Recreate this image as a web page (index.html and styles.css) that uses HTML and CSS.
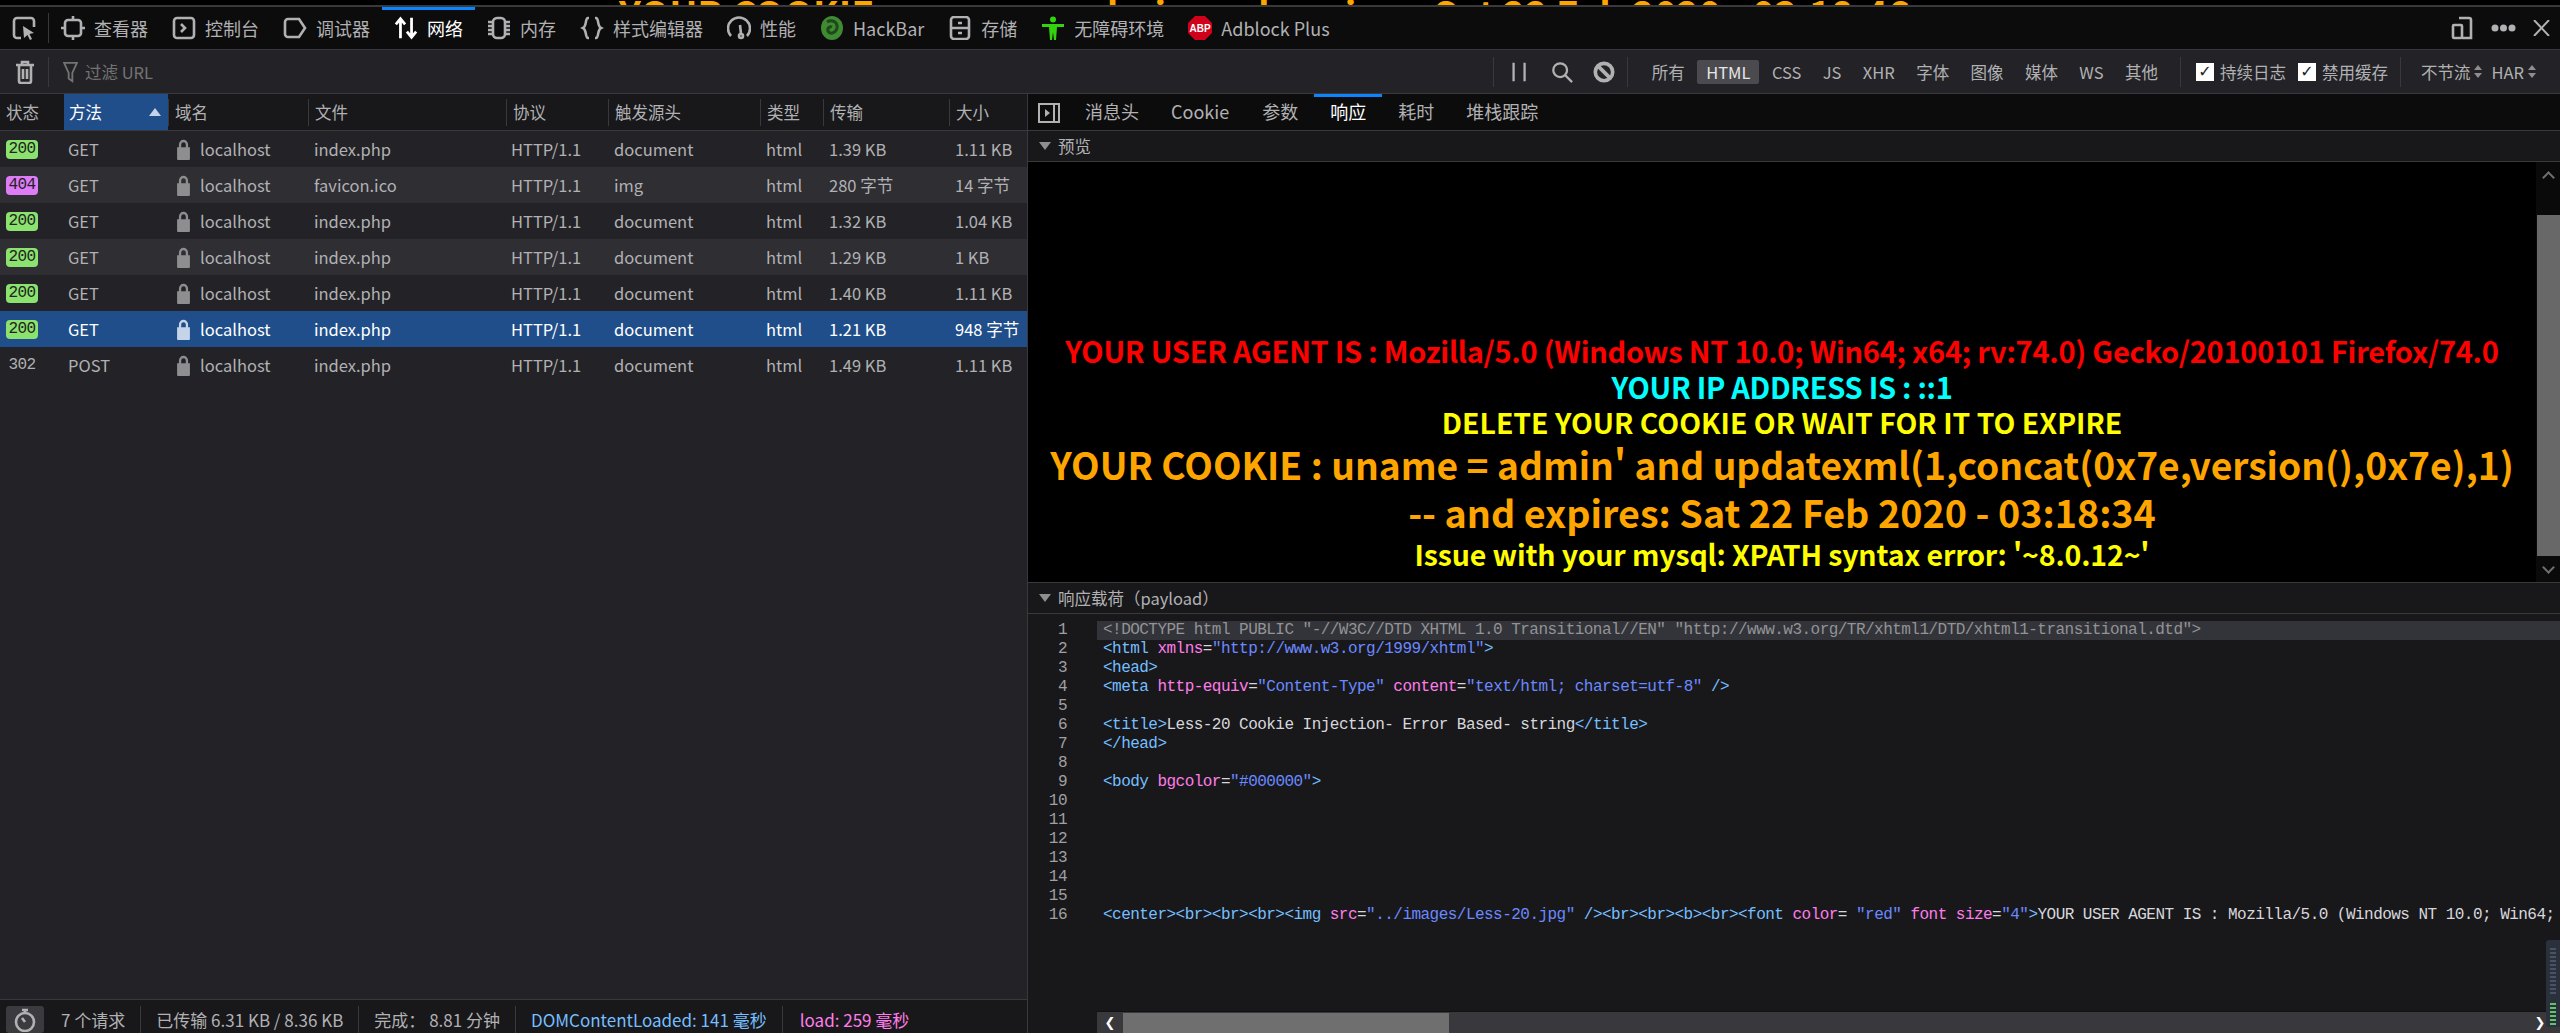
FILE: index.html
```html
<!DOCTYPE html>
<html lang="zh">
<head>
    <meta charset="UTF-8">
    <title>网络</title>
    <link rel="stylesheet" href="styles.css">
</head>
<body>
    <div class="page-strip"><span>YOUR COOKIE : uname = admin and expires: Sat 22 Feb 2020 - 03:18:46</span></div>

    <div class="toolbox">
        <div class="picker">
            <svg class="icon" viewBox="0 0 24 24"><path d="M9 22H5a3 3 0 0 1-3-3V5a3 3 0 0 1 3-3h14a3 3 0 0 1 3 3v6"/><path class="solid" d="M11 10l11 7-4.500 1 2.500 5-2 1-2.500-5L12 22z"/></svg>
        </div>
        <div class="tab">
            <svg class="icon" viewBox="0 0 24 24"><rect x="4" y="4" width="16" height="16" rx="3"/><path d="M12 0v4M12 20v4M0 12h4M20 12h4"/></svg>
            查看器
        </div>
        <div class="tab">
            <svg class="icon" viewBox="0 0 24 24"><rect x="2" y="2" width="20" height="20" rx="3"/><path d="M9 8l4 4-4 4"/></svg>
            控制台
        </div>
        <div class="tab">
            <svg class="icon" viewBox="0 0 24 24"><path d="M5 3h11l6 9-6 9H5a3 3 0 0 1-3-3V6a3 3 0 0 1 3-3z"/></svg>
            调试器
        </div>
        <div class="tab tab-active">
            <svg class="icon icon-white" viewBox="0 0 26 24"><path d="M7 23V2M2 8l5-6 5 6M19 1v21M14 16l5 6 5-6"/></svg>
            网络
        </div>
        <div class="tab">
            <svg class="icon" viewBox="0 0 24 24"><rect x="6" y="2" width="12" height="20" rx="4"/><path d="M1 6h4M1 10h4M1 14h4M1 18h4M19 6h4M19 10h4M19 14h4M19 18h4"/></svg>
            内存
        </div>
        <div class="tab">
            <svg class="icon" viewBox="0 0 24 24"><path d="M9 2H8C5 2 7 10 3 12c4 2 2 10 5 10h1M15 2h1c3 0 1 8 5 10-4 2-2 10-5 10h-1"/></svg>
            样式编辑器
        </div>
        <div class="tab">
            <svg class="icon" viewBox="0 0 24 24"><path d="M4 20A11 11 0 1 1 20 20"/><path d="M13 9l1 9"/><circle cx="14" cy="20" r="2"/></svg>
            性能
        </div>
        <div class="tab">
            <svg class="icon icon-plain" viewBox="0 0 24 24"><ellipse cx="12" cy="12" rx="11" ry="12" fill="#3f8a33"/><path d="M7 6c5-3 11 0 10 6-1 5-7 7-9 3-1-3 2-5 4-4" fill="none" stroke="#1d4a18" stroke-width="3"/></svg>
            HackBar
        </div>
        <div class="tab">
            <svg class="icon" viewBox="0 0 24 24"><rect x="3" y="1" width="18" height="22" rx="3"/><path d="M3 12h18M10 7h4M10 17h4"/></svg>
            存储
        </div>
        <div class="tab">
            <svg class="icon icon-plain" viewBox="0 0 24 24"><circle cx="12" cy="3.500" r="3" fill="#33d40f"/><path fill="#33d40f" d="M1 8h22v3h-7l-1 13h-2l-1-8-1 8H9L8 11H1z"/></svg>
            无障碍环境
        </div>
        <div class="tab">
            <svg class="icon icon-plain" viewBox="0 0 24 24"><path fill="#d0021b" d="M7 0h10l7 7v10l-7 7H7l-7-7V7z"/><text x="12" y="16" class="abp-text">ABP</text></svg>
            Adblock Plus
        </div>
        <div class="toolbox-end">
            <svg class="icon" viewBox="0 0 24 24"><path d="M9 2h10a2 2 0 0 1 2 2v18h-9"/><rect x="3" y="9" width="9" height="13" rx="1"/></svg>
            <svg class="dots" viewBox="0 0 25 8"><circle cx="4" cy="4" r="3.500"/><circle cx="12.500" cy="4" r="3.500"/><circle cx="21" cy="4" r="3.500"/></svg>
            <svg class="close" viewBox="0 0 17 16"><path d="M1 0l15 16M16 0L1 16"/></svg>
        </div>
    </div>

    <div class="filterbar">
        <div class="trash">
            <svg class="icon" viewBox="0 0 24 24"><path d="M3 5h18M9 5V2h6v3M6 5v16a2 2 0 0 0 2 2h8a2 2 0 0 0 2-2V5M10 9v10M14 9v10"/></svg>
        </div>
        <div class="url-filter">
            <svg class="funnel" viewBox="0 0 16 24"><path d="M1 2h14l-5 11v9l-4-3v-6z"/></svg>
            过滤 URL
        </div>
        <div class="filter-tools">
            <svg class="tool" viewBox="0 0 24 24"><path d="M5 2v20M17 2v20"/></svg>
            <svg class="tool" viewBox="0 0 24 24"><circle cx="10" cy="10" r="7.500"/><path d="M15 15l8 8"/></svg>
            <svg class="tool tool-block" viewBox="0 0 24 24"><circle cx="12" cy="12" r="9.500"/><path d="M5 5l14 14"/></svg>
        </div>
        <div class="type-filters">
            <span class="type">所有</span>
            <span class="type type-on">HTML</span>
            <span class="type">CSS</span>
            <span class="type">JS</span>
            <span class="type">XHR</span>
            <span class="type">字体</span>
            <span class="type">图像</span>
            <span class="type">媒体</span>
            <span class="type">WS</span>
            <span class="type">其他</span>
        </div>
        <div class="checks">
            <span class="check"><span class="box">✓</span>持续日志</span>
            <span class="check"><span class="box">✓</span>禁用缓存</span>
        </div>
        <div class="selects">
            <span class="select">不节流<svg class="updown" viewBox="0 0 8 13"><path d="M0 5l4-5 4 5zM0 8l4 5 4-5z"/></svg></span>
            <span class="select">HAR<svg class="updown" viewBox="0 0 8 13"><path d="M0 5l4-5 4 5zM0 8l4 5 4-5z"/></svg></span>
        </div>
    </div>

    <div class="main">
        <div class="requests">
            <div class="net-head">
                <div class="th th-first">状态</div>
                <div class="th th-sorted">方法<span class="sort-arrow"></span></div>
                <div class="th">域名</div>
                <div class="th">文件</div>
                <div class="th">协议</div>
                <div class="th">触发源头</div>
                <div class="th">类型</div>
                <div class="th">传输</div>
                <div class="th">大小</div>
            </div>
            <div class="net-list">
                <div class="net-row">
                    <div class="td"><span class="badge">200</span></div><div class="td">GET</div>
                    <div class="td td-host"><svg class="lock" viewBox="0 0 16 24"><path d="M1 10h2V7a5 5 0 0 1 10 0v3h2v13a1 1 0 0 1-1 1H2a1 1 0 0 1-1-1zM5.500 10h5V7a2.500 2.500 0 0 0-5 0z"/></svg>localhost</div>
                    <div class="td">index.php</div><div class="td">HTTP/1.1</div><div class="td">document</div><div class="td">html</div><div class="td">1.39 KB</div><div class="td">1.11 KB</div>
                </div>
                <div class="net-row">
                    <div class="td"><span class="badge badge-404">404</span></div><div class="td">GET</div>
                    <div class="td td-host"><svg class="lock" viewBox="0 0 16 24"><path d="M1 10h2V7a5 5 0 0 1 10 0v3h2v13a1 1 0 0 1-1 1H2a1 1 0 0 1-1-1zM5.500 10h5V7a2.500 2.500 0 0 0-5 0z"/></svg>localhost</div>
                    <div class="td">favicon.ico</div><div class="td">HTTP/1.1</div><div class="td">img</div><div class="td">html</div><div class="td">280 字节</div><div class="td">14 字节</div>
                </div>
                <div class="net-row">
                    <div class="td"><span class="badge">200</span></div><div class="td">GET</div>
                    <div class="td td-host"><svg class="lock" viewBox="0 0 16 24"><path d="M1 10h2V7a5 5 0 0 1 10 0v3h2v13a1 1 0 0 1-1 1H2a1 1 0 0 1-1-1zM5.500 10h5V7a2.500 2.500 0 0 0-5 0z"/></svg>localhost</div>
                    <div class="td">index.php</div><div class="td">HTTP/1.1</div><div class="td">document</div><div class="td">html</div><div class="td">1.32 KB</div><div class="td">1.04 KB</div>
                </div>
                <div class="net-row">
                    <div class="td"><span class="badge">200</span></div><div class="td">GET</div>
                    <div class="td td-host"><svg class="lock" viewBox="0 0 16 24"><path d="M1 10h2V7a5 5 0 0 1 10 0v3h2v13a1 1 0 0 1-1 1H2a1 1 0 0 1-1-1zM5.500 10h5V7a2.500 2.500 0 0 0-5 0z"/></svg>localhost</div>
                    <div class="td">index.php</div><div class="td">HTTP/1.1</div><div class="td">document</div><div class="td">html</div><div class="td">1.29 KB</div><div class="td">1 KB</div>
                </div>
                <div class="net-row">
                    <div class="td"><span class="badge">200</span></div><div class="td">GET</div>
                    <div class="td td-host"><svg class="lock" viewBox="0 0 16 24"><path d="M1 10h2V7a5 5 0 0 1 10 0v3h2v13a1 1 0 0 1-1 1H2a1 1 0 0 1-1-1zM5.500 10h5V7a2.500 2.500 0 0 0-5 0z"/></svg>localhost</div>
                    <div class="td">index.php</div><div class="td">HTTP/1.1</div><div class="td">document</div><div class="td">html</div><div class="td">1.40 KB</div><div class="td">1.11 KB</div>
                </div>
                <div class="net-row net-row-selected">
                    <div class="td"><span class="badge">200</span></div><div class="td">GET</div>
                    <div class="td td-host"><svg class="lock" viewBox="0 0 16 24"><path d="M1 10h2V7a5 5 0 0 1 10 0v3h2v13a1 1 0 0 1-1 1H2a1 1 0 0 1-1-1zM5.500 10h5V7a2.500 2.500 0 0 0-5 0z"/></svg>localhost</div>
                    <div class="td">index.php</div><div class="td">HTTP/1.1</div><div class="td">document</div><div class="td">html</div><div class="td">1.21 KB</div><div class="td">948 字节</div>
                </div>
                <div class="net-row">
                    <div class="td"><span class="badge-plain">302</span></div><div class="td">POST</div>
                    <div class="td td-host"><svg class="lock" viewBox="0 0 16 24"><path d="M1 10h2V7a5 5 0 0 1 10 0v3h2v13a1 1 0 0 1-1 1H2a1 1 0 0 1-1-1zM5.500 10h5V7a2.500 2.500 0 0 0-5 0z"/></svg>localhost</div>
                    <div class="td">index.php</div><div class="td">HTTP/1.1</div><div class="td">document</div><div class="td">html</div><div class="td">1.49 KB</div><div class="td">1.11 KB</div>
                </div>
            </div>
            <div class="summary">
                <div class="clock">
                    <svg class="icon" viewBox="0 0 24 24"><circle cx="12" cy="14" r="9"/><path d="M9 2h6M12 2v3M12 14l-3-4"/></svg>
                </div>
                <span class="stat stat-count">7 个请求</span>
                <span class="stat">已传输 6.31 KB / 8.36 KB</span>
                <span class="stat">完成： 8.81 分钟</span>
                <span class="stat stat-dom">DOMContentLoaded: 141 毫秒</span>
                <span class="stat stat-load">load: 259 毫秒</span>
            </div>
        </div>

        <div class="details">
            <div class="detail-tabs">
                <svg class="side-toggle" viewBox="0 0 22 20"><rect x="1" y="1" width="20" height="18"/><path d="M16 1v18"/><path class="solid" d="M7 6l5 4-5 4z"/></svg>
                <span class="dtab">消息头</span>
                <span class="dtab dtab-cookie">Cookie</span>
                <span class="dtab">参数</span>
                <span class="dtab dtab-active">响应</span>
                <span class="dtab">耗时</span>
                <span class="dtab">堆栈跟踪</span>
            </div>
            <div class="section-head"><span class="caret"></span>预览</div>
            <div class="preview">
                <div class="preview-body">
                    <div class="pv pv-red">YOUR USER AGENT IS : Mozilla/5.0 (Windows NT 10.0; Win64; x64; rv:74.0) Gecko/20100101 Firefox/74.0</div>
                    <div class="pv pv-cyan">YOUR IP ADDRESS IS : ::1</div>
                    <div class="pv pv-delete">DELETE YOUR COOKIE OR WAIT FOR IT TO EXPIRE</div>
                    <div class="pv pv-big pv-cookie">YOUR COOKIE : uname = admin' and updatexml(1,concat(0x7e,version(),0x7e),1)</div>
                    <div class="pv pv-big">-- and expires: Sat 22 Feb 2020 - 03:18:34</div>
                    <div class="pv pv-issue">Issue with your mysql: XPATH syntax error: '~8.0.12~'</div>
                </div>
                <div class="vscroll">
                    <span class="chev chev-up"></span>
                    <div class="vthumb"></div>
                    <span class="chev chev-down"></span>
                </div>
            </div>
            <div class="section-head"><span class="caret"></span>响应载荷（payload）</div>
            <div class="code">
                <div class="line line-on"><span class="ln">1</span><span class="src doctype">&lt;!DOCTYPE html PUBLIC "-//W3C//DTD XHTML 1.0 Transitional//EN" "http://www.w3.org/TR/xhtml1/DTD/xhtml1-transitional.dtd"&gt;</span></div>
                <div class="line"><span class="ln">2</span><span class="src"><b>&lt;html</b> <i>xmlns</i>=<u>"http://www.w3.org/1999/xhtml"</u><b>&gt;</b></span></div>
                <div class="line"><span class="ln">3</span><span class="src"><b>&lt;head&gt;</b></span></div>
                <div class="line"><span class="ln">4</span><span class="src"><b>&lt;meta</b> <i>http-equiv</i>=<u>"Content-Type"</u> <i>content</i>=<u>"text/html; charset=utf-8"</u> <b>/&gt;</b></span></div>
                <div class="line"><span class="ln">5</span><span class="src"></span></div>
                <div class="line"><span class="ln">6</span><span class="src"><b>&lt;title&gt;</b>Less-20 Cookie Injection- Error Based- string<b>&lt;/title&gt;</b></span></div>
                <div class="line"><span class="ln">7</span><span class="src"><b>&lt;/head&gt;</b></span></div>
                <div class="line"><span class="ln">8</span><span class="src"></span></div>
                <div class="line"><span class="ln">9</span><span class="src"><b>&lt;body</b> <i>bgcolor</i>=<u>"#000000"</u><b>&gt;</b></span></div>
                <div class="line"><span class="ln">10</span><span class="src"></span></div>
                <div class="line"><span class="ln">11</span><span class="src"></span></div>
                <div class="line"><span class="ln">12</span><span class="src"></span></div>
                <div class="line"><span class="ln">13</span><span class="src"></span></div>
                <div class="line"><span class="ln">14</span><span class="src"></span></div>
                <div class="line"><span class="ln">15</span><span class="src"></span></div>
                <div class="line"><span class="ln">16</span><span class="src"><b>&lt;center&gt;&lt;br&gt;&lt;br&gt;&lt;br&gt;&lt;img</b> <i>src</i>=<u>"../images/Less-20.jpg"</u> <b>/&gt;&lt;br&gt;&lt;br&gt;&lt;b&gt;&lt;br&gt;&lt;font</b> <i>color</i>= <u>"red"</u> <i>font</i> <i>size</i>=<u>"4"</u><b>&gt;</b>YOUR USER AGENT IS : Mozilla/5.0 (Windows NT 10.0; Win64;</span></div>
            </div>
            <div class="hscroll-row">
                <div class="hscroll">
                    <span class="hchev">❮</span>
                    <div class="hthumb"></div>
                    <span class="hchev hchev-end">❯</span>
                </div>
            </div>
            <div class="meter"></div>
        </div>
    </div>
</body>
</html>
```
FILE: styles.css
```css
* {
    box-sizing: border-box;
}

body {
    margin: 0;
    height: 100vh;
    display: flex;
    flex-direction: column;
    overflow: hidden;
    background: #000;
    color: #b1b1b3;
    font-family: "Noto Sans CJK SC", "Liberation Sans", sans-serif;
    font-size: 16.5px;
}

.page-strip {
    height: 5px;
    flex: none;
    overflow: hidden;
    padding-left: 619px;
    background: #000;
    color: orange;
    font-weight: bold;
    font-size: 37.700px;
    line-height: 26px;
    white-space: nowrap;
}

.icon {
    width: 24px;
    height: 24px;
    flex: none;
    fill: none;
    stroke: #b1b1b3;
    stroke-width: 2.600;
}

.icon-white {
    stroke: #fff;
    stroke-width: 3;
}

.icon-plain {
    stroke: none;
}

.solid {
    fill: #b1b1b3;
    stroke: none;
}

.abp-text {
    fill: #fff;
    font-size: 10px;
    font-weight: bold;
    text-anchor: middle;
    font-family: "Liberation Sans", sans-serif;
}

/* top tabs */
.toolbox {
    height: 45px;
    flex: none;
    display: flex;
    align-items: center;
    background: #0c0c0d;
    border-top: 2px solid #38383d;
    border-bottom: 1px solid #38383d;
    font-size: 18px;
}

.picker {
    width: 49px;
    height: 30px;
    flex: none;
    display: flex;
    align-items: center;
    padding-left: 12px;
    border-right: 1px solid #38383d;
}

.tab {
    height: 100%;
    display: flex;
    align-items: center;
    gap: 9px;
    padding: 0 12px;
    white-space: nowrap;
}

.tab-active {
    color: #fff;
    box-shadow: inset 0 3px 0 #0a84ff;
}

.toolbox-end {
    margin-left: auto;
    display: flex;
    align-items: center;
    gap: 17px;
    padding-right: 10px;
}

.dots {
    width: 25px;
    height: 8px;
    fill: #b1b1b3;
}

.close {
    width: 17px;
    height: 16px;
    fill: none;
    stroke: #b1b1b3;
    stroke-width: 2;
}

/* filter bar */
.filterbar {
    height: 44px;
    flex: none;
    display: flex;
    align-items: center;
    padding-right: 24px;
    background: #232327;
    border-bottom: 1px solid #38383d;
}

.trash {
    width: 49px;
    height: 30px;
    flex: none;
    display: flex;
    align-items: center;
    padding-left: 13px;
    border-right: 1px solid #38383d;
}

.url-filter {
    display: flex;
    align-items: center;
    gap: 7px;
    padding-left: 14px;
    color: #737373;
    flex: 1;
}

.funnel {
    width: 15px;
    height: 22px;
    fill: none;
    stroke: #737373;
    stroke-width: 2;
}

.filter-tools {
    height: 30px;
    display: flex;
    align-items: center;
    gap: 20px;
    padding: 0 12px 0 15px;
    border-left: 1px solid #38383d;
    border-right: 1px solid #38383d;
}

.tool {
    width: 22px;
    height: 22px;
    fill: none;
    stroke: #b1b1b3;
    stroke-width: 2.500;
}

.tool-block {
    stroke-width: 4;
}

.type-filters {
    height: 30px;
    display: flex;
    align-items: center;
    gap: 3.400px;
    padding: 0 13px 0 15px;
    border-right: 1px solid #38383d;
}

.type {
    height: 24px;
    line-height: 24px;
    padding: 0 9px;
    border-radius: 2px;
}

.type-on {
    background: #4a4a4f;
    color: #e6e6e7;
}

.checks {
    display: flex;
    align-items: center;
    gap: 12px;
    padding: 0 12px 0 15px;
}

.check {
    display: flex;
    align-items: center;
    gap: 6px;
}

.box {
    width: 18px;
    height: 18px;
    background: #fff;
    color: #222;
    font-size: 16px;
    line-height: 18px;
    text-align: center;
    font-family: "DejaVu Sans", sans-serif;
}

.selects {
    height: 30px;
    display: flex;
    align-items: center;
    gap: 9px;
    padding-left: 20px;
    border-left: 1px solid #38383d;
}

.select {
    display: flex;
    align-items: center;
    gap: 4px;
}

.updown {
    width: 8px;
    height: 13px;
    fill: #8e8e91;
}

/* main area */
.main {
    flex: 1;
    min-height: 0;
    display: flex;
    position: relative;
}

.requests {
    width: 1028px;
    flex: none;
    display: flex;
    flex-direction: column;
    background: #232327;
    border-right: 1px solid #38383d;
}

.net-head,
.net-row {
    display: grid;
    grid-template-columns: 64px 104px 140px 198px 102px 152px 63px 126px 78px;
}

.net-head {
    height: 37px;
    flex: none;
    align-items: center;
    background: #18181b;
    border-bottom: 1px solid #38383d;
}

.th {
    height: 27px;
    line-height: 27px;
    padding-left: 6px;
    border-left: 1px solid #38383d;
    white-space: nowrap;
}

.th-first {
    border-left: 0;
}

.th-sorted {
    height: 36px;
    line-height: 36px;
    display: flex;
    align-items: center;
    justify-content: space-between;
    padding-left: 5px;
    padding-right: 7px;
    border-left: 0;
    background: #204e8a;
    color: #fff;
}

.sort-arrow {
    border-left: 6px solid transparent;
    border-right: 6px solid transparent;
    border-bottom: 8px solid #c5d4e8;
}

.net-list {
    flex: 1;
}

.net-row {
    height: 36px;
    align-items: center;
}

.net-row:nth-child(even) {
    background: #2e2e33;
}

.net-row-selected,
.net-row-selected:nth-child(even) {
    background: #204e8a;
    color: #fff;
}

.td {
    padding-left: 6px;
    white-space: nowrap;
}

.td:nth-child(2) {
    padding-left: 4px;
}

.td:nth-child(5) {
    padding-left: 5px;
}

.td-host {
    display: flex;
    align-items: center;
    gap: 9px;
    padding-left: 8px;
}

.lock {
    width: 15px;
    height: 22px;
    fill: #8e8e91;
    fill-rule: evenodd;
}

.net-row-selected .lock {
    fill: #c5d4e8;
}

.badge,
.badge-plain {
    display: block;
    width: 32px;
    height: 19px;
    line-height: 19px;
    text-align: center;
    font-family: "Liberation Mono", monospace;
    font-size: 16px;
    letter-spacing: -0.520px;
}

.badge {
    background: #8be26f;
    color: #222;
    border-radius: 4px;
}

.badge-404 {
    background: #de7cf7;
}

/* summary bar */
.summary {
    height: 34px;
    flex: none;
    display: flex;
    align-items: center;
    padding-top: 6px;
    background: #18181b;
    border-top: 1px solid #38383d;
    font-size: 17px;
    white-space: nowrap;
}

.clock {
    width: 38px;
    height: 27px;
    margin-left: 6px;
    display: flex;
    align-items: center;
    justify-content: center;
    background: #3a3a3f;
    border-radius: 3px;
}

.stat {
    height: 27px;
    line-height: 27px;
    padding: 0 15px;
    border-left: 1px solid #38383d;
}

.stat-count {
    border-left: 0;
    padding-left: 17px;
}

.stat-dom {
    color: #75bfff;
}

.stat-load {
    padding-left: 17px;
    color: #ff7de9;
}

/* right side */
.details {
    flex: 1;
    min-width: 0;
    display: flex;
    flex-direction: column;
    background: #18181b;
}

.detail-tabs {
    height: 37px;
    flex: none;
    display: flex;
    align-items: stretch;
    background: #0c0c0d;
    border-bottom: 1px solid #38383d;
    font-size: 18px;
}

.side-toggle {
    width: 22px;
    height: 20px;
    margin: 9px 9px 0 10px;
    fill: none;
    stroke: #b1b1b3;
    stroke-width: 2;
}

.dtab {
    line-height: 34px;
    padding: 0 16px;
}

.dtab-cookie {
    padding-right: 17px;
}

.dtab-active {
    color: #fff;
    box-shadow: inset 0 3px 0 #0a84ff;
}

.section-head {
    height: 31px;
    flex: none;
    display: flex;
    align-items: center;
    gap: 7px;
    padding-left: 11px;
    background: #18181b;
    border-bottom: 1px solid #38383d;
}

.caret {
    border-left: 6px solid transparent;
    border-right: 6px solid transparent;
    border-top: 8px solid #8e8e91;
}

.preview {
    height: 421px;
    flex: none;
    display: flex;
    background: #000;
    border-bottom: 1px solid #38383d;
}

.preview-body {
    flex: 1;
    padding-top: 170px;
    font-weight: bold;
    text-align: center;
    white-space: nowrap;
}

.pv {
    line-height: 36px;
}

.pv-red {
    color: #f00;
    font-size: 29px;
    letter-spacing: -0.260px;
}

.pv-cyan {
    color: #0ff;
    font-size: 29px;
    letter-spacing: -0.300px;
}

.pv-delete {
    color: #ff0;
    font-size: 28.400px;
}

.pv-issue {
    color: #ff0;
    font-size: 28.500px;
    letter-spacing: -0.150px;
}

.pv-big {
    color: orange;
    font-size: 37.700px;
    line-height: 48px;
}

.pv-cookie {
    font-size: 37.200px;
}

.vscroll {
    width: 24px;
    flex: none;
    display: flex;
    flex-direction: column;
    align-items: center;
    background: #0a0a0a;
}

.vthumb {
    width: 23px;
    height: 341px;
    margin-top: 33px;
    background: #686868;
}

.chev {
    width: 9px;
    height: 9px;
    border-left: 2.500px solid #6f6f6f;
    border-top: 2.500px solid #6f6f6f;
}

.chev-up {
    transform: rotate(45deg);
    margin-top: 11px;
}

.chev-down {
    transform: rotate(225deg);
    margin-top: 7px;
}

.code {
    flex: 1;
    min-height: 0;
    padding-top: 7px;
    font-family: "Liberation Mono", monospace;
    font-size: 16px;
    letter-spacing: -0.530px;
    line-height: 19px;
    overflow: hidden;
}

.line {
    height: 19px;
    display: flex;
}

.line-on .src {
    background: #32343a;
}

.ln {
    width: 39px;
    flex: none;
    text-align: right;
    color: #a0a0a3;
}

.src {
    flex: 1;
    min-width: 0;
    margin-left: 30px;
    padding-left: 6px;
    white-space: pre;
    overflow: hidden;
    color: #d7d7db;
}

.src b {
    font-weight: normal;
    color: #75bfff;
}

.src i {
    font-style: normal;
    color: #ff7de9;
}

.src u {
    text-decoration: none;
    color: #6b89ff;
}

.doctype {
    color: #939395;
}

.hscroll-row {
    height: 22px;
    flex: none;
    padding-left: 69px;
}

.hscroll {
    height: 22px;
    display: flex;
    align-items: stretch;
    background: #38383d;
    border-top: 1px solid #111;
}

.hchev {
    width: 26px;
    line-height: 22px;
    font-size: 13px;
    text-align: center;
    color: #fff;
    font-family: "DejaVu Sans", sans-serif;
}

.hchev-end {
    margin-left: auto;
    margin-right: 7px;
}

.hthumb {
    width: 326px;
    margin-top: 1px;
    background: #6f6f6f;
}

.meter {
    position: absolute;
    right: 0;
    bottom: 6px;
    width: 14px;
    height: 87px;
    background:
        repeating-linear-gradient(#66c26a 0 2px, transparent 2px 4px) 50% 100% / 6px 24px no-repeat,
        repeating-linear-gradient(#4a5362 0 2px, transparent 2px 4px) 50% 8px / 6px 48px no-repeat,
        #2a303c;
    border-radius: 3px 0 0 3px;
}
```
